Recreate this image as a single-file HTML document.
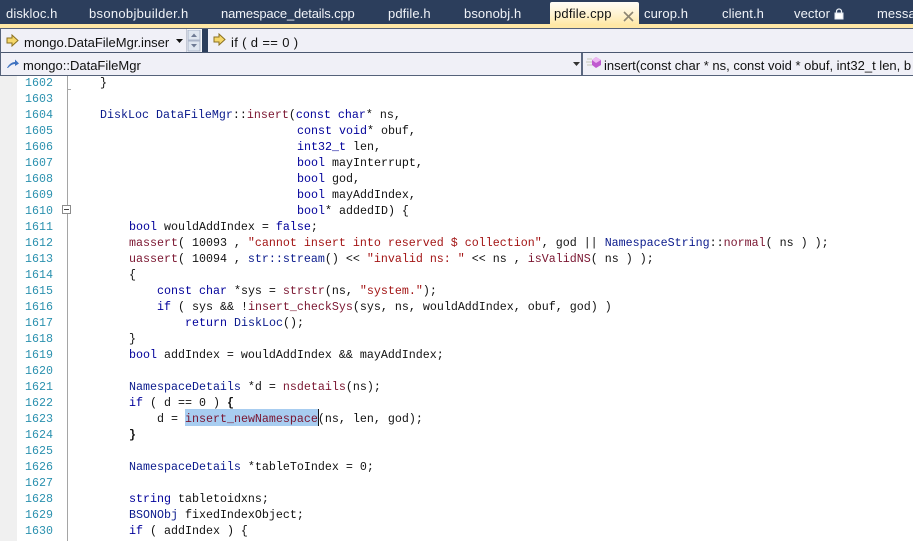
<!DOCTYPE html>
<html><head><meta charset="utf-8"><style>
html,body{margin:0;padding:0;background:#fff}
#p{position:relative;width:913px;height:541px;overflow:hidden;background:#fff;font-family:"Liberation Sans",sans-serif}
.a{position:absolute}
.t{position:absolute;top:6px;font-size:13px;line-height:16px;color:#f0f3f8;white-space:nowrap;letter-spacing:.1px}
.b{position:absolute;font-size:13px;line-height:16px;color:#111;white-space:nowrap}
.n{position:absolute;left:25px;margin-top:1px;font:11.667px/16px "Liberation Mono",monospace;color:#2b91af}
.c{position:absolute;margin-top:1px;font:11.667px/16px "Liberation Mono",monospace;color:#111;white-space:pre;height:16px}
.k{color:#00009a}.f{color:#7a1530}.s{color:#a31515}.u{color:#0a1a8c}
</style></head><body><div id="p">
<div class="a" style="left:0;top:0;width:913px;height:25px;background:#2c3e5c"></div>
<div class="t" style="left:6px">diskloc.h</div>
<div class="t" style="left:89px;letter-spacing:.3px">bsonobjbuilder.h</div>
<div class="t" style="left:221px;letter-spacing:-.14px">namespace_details.cpp</div>
<div class="t" style="left:388px">pdfile.h</div>
<div class="t" style="left:464px">bsonobj.h</div>
<div class="a" style="left:550px;top:2px;width:89px;height:23px;background:linear-gradient(#fffdf7,#fff3cf 55%,#ffe8a6);border-radius:2px 2px 0 0"></div>
<div class="t" style="left:554px;color:#111;letter-spacing:.2px">pdfile.cpp</div>
<svg class="a" style="left:622px;top:10px" width="14" height="12"><path d="M2 2L11 11M11 2L2 11" stroke="#8d8673" stroke-width="1.6" fill="none"/></svg>
<div class="t" style="left:644px">curop.h</div>
<div class="t" style="left:722px">client.h</div>
<div class="t" style="left:794px">vector</div>
<svg class="a" style="left:834px;top:8px" width="10" height="12"><path d="M2.5 5V3.5a2.5 2.5 0 0 1 5 0V5" stroke="#e8eef5" stroke-width="1.2" fill="none"/><rect x="1" y="5" width="8" height="6" fill="#fff" stroke="#dfe6ef"/></svg>
<div class="t" style="left:877px">messa</div>
<div class="a" style="left:0;top:24px;width:913px;height:4px;background:#ffe8a6"></div>
<div class="a" style="left:550px;top:24px;width:89px;height:1px;background:#ffe8a6"></div>
<div class="a" style="left:0;top:28px;width:913px;height:48px;background:#f0f0f7"></div>
<div class="a" style="left:0;top:28px;width:913px;height:1px;background:#55627a"></div>
<div class="a" style="left:0;top:52px;width:913px;height:1px;background:#4a5770"></div>
<div class="a" style="left:0;top:75px;width:913px;height:1px;background:#55627a"></div>
<div class="a" style="left:0;top:29px;width:1px;height:47px;background:#55627a"></div>
<div class="a" style="left:202px;top:29px;width:6px;height:23px;background:#2c3e5c"></div>
<div class="a" style="left:186px;top:29px;width:16px;height:23px;background:#f5f6fa;border-left:1px solid #c4c9d6;box-sizing:border-box"></div>
<svg class="a" style="left:187px;top:30px" width="15" height="22">
<rect x="1" y="0" width="12" height="10" fill="#dfe6f0" stroke="#aab4c8"/><rect x="1" y="11" width="12" height="10" fill="#dfe6f0" stroke="#aab4c8"/>
<path d="M4 7L7 3.5L10 7Z" fill="#6e7a94"/><path d="M4 14L7 17.5L10 14Z" fill="#6e7a94"/></svg>
<svg class="a" style="left:6px;top:34px" width="14" height="13"><path d="M1 4H6V1L12 6.5L6 12V9H1Z" fill="#f5d76a" stroke="#8a7020" stroke-width="1"/></svg>
<div class="b" style="left:24px;top:35px;width:145px;overflow:hidden">mongo.DataFileMgr.insert</div>
<svg class="a" style="left:175px;top:38px" width="9" height="6"><path d="M1 1H8L4.5 5Z" fill="#111"/></svg>
<svg class="a" style="left:213px;top:33px" width="14" height="13"><path d="M1 4H6V1L12 6.5L6 12V9H1Z" fill="#f5d76a" stroke="#8a7020" stroke-width="1"/></svg>
<div class="b" style="left:231px;top:35px;letter-spacing:.35px">if ( d == 0 )</div>
<svg class="a" style="left:6px;top:58px" width="14" height="12"><path d="M1 10C3 6 6 4 9 4V1.5L13 5.5L9 8V6C6 6 4 8 2 10Z" fill="#3f72c0"/></svg>
<div class="b" style="left:23px;top:58px">mongo::DataFileMgr</div>
<svg class="a" style="left:573px;top:62px" width="7" height="5"><path d="M0 0H7L3.5 4Z" fill="#333"/></svg>
<div class="a" style="left:581px;top:53px;width:2px;height:22px;background:#5b6880"></div>
<svg class="a" style="left:586px;top:56px" width="17" height="14"><path d="M1 3H6M0 6H6M1 9H6" stroke="#c9c9b8" stroke-width="1"/><path d="M10 1L15 4V9L10 12L6 9V4Z" fill="#c05ad0"/><path d="M10 1L15 4L10 7L6 4Z" fill="#eeb8f2"/></svg>
<div class="b" style="left:604px;top:58px">insert(const char * ns, const void * obuf, int32_t len, b</div>
<div class="a" style="left:0;top:76px;width:17px;height:465px;background:#f0f0f0"></div>
<div class="a" style="left:67px;top:76px;width:1px;height:465px;background:#a5a5a5"></div>
<div class="a" style="left:62px;top:205px;width:9px;height:9px;box-sizing:border-box;border:1px solid #8c8c8c;background:#fff"></div>
<div class="a" style="left:64px;top:209px;width:5px;height:1px;background:#444"></div>
<div class="a" style="left:67px;top:89px;width:4px;height:1px;background:#a5a5a5"></div>
<div class="a" style="left:185px;top:409px;width:133px;height:17px;background:#a8cdf0"></div>
<div class="a" style="left:318px;top:409px;width:1px;height:17px;background:#111"></div>
<div class="n" style="top:74px">1602</div><div class="n" style="top:90px">1603</div><div class="n" style="top:106px">1604</div><div class="n" style="top:122px">1605</div><div class="n" style="top:138px">1606</div><div class="n" style="top:154px">1607</div><div class="n" style="top:170px">1608</div><div class="n" style="top:186px">1609</div><div class="n" style="top:202px">1610</div><div class="n" style="top:218px">1611</div><div class="n" style="top:234px">1612</div><div class="n" style="top:250px">1613</div><div class="n" style="top:266px">1614</div><div class="n" style="top:282px">1615</div><div class="n" style="top:298px">1616</div><div class="n" style="top:314px">1617</div><div class="n" style="top:330px">1618</div><div class="n" style="top:346px">1619</div><div class="n" style="top:362px">1620</div><div class="n" style="top:378px">1621</div><div class="n" style="top:394px">1622</div><div class="n" style="top:410px">1623</div><div class="n" style="top:426px">1624</div><div class="n" style="top:442px">1625</div><div class="n" style="top:458px">1626</div><div class="n" style="top:474px">1627</div><div class="n" style="top:490px">1628</div><div class="n" style="top:506px">1629</div><div class="n" style="top:522px">1630</div>
<div class="c" style="left:100px;top:74px">}</div>
<div class="c" style="left:100px;top:106px"><span class="u">DiskLoc DataFileMgr</span>::<span class="f">insert</span>(<span class="k">const char</span>* ns,</div>
<div class="c" style="left:297px;top:122px"><span class="k">const void</span>* obuf,</div>
<div class="c" style="left:297px;top:138px"><span class="k">int32_t</span> len,</div>
<div class="c" style="left:297px;top:154px"><span class="k">bool</span> mayInterrupt,</div>
<div class="c" style="left:297px;top:170px"><span class="k">bool</span> god,</div>
<div class="c" style="left:297px;top:186px"><span class="k">bool</span> mayAddIndex,</div>
<div class="c" style="left:297px;top:202px"><span class="k">bool</span>* addedID) {</div>
<div class="c" style="left:129px;top:218px"><span class="k">bool</span> wouldAddIndex = <span class="k">false</span>;</div>
<div class="c" style="left:129px;top:234px"><span class="f">massert</span>( 10093 , <span class="s">"cannot insert into reserved $ collection"</span>, god || <span class="u">NamespaceString</span>::<span class="f">normal</span>( ns ) );</div>
<div class="c" style="left:129px;top:250px"><span class="f">uassert</span>( 10094 , <span class="u">str::stream</span>() &lt;&lt; <span class="s">"invalid ns: "</span> &lt;&lt; ns , <span class="f">isValidNS</span>( ns ) );</div>
<div class="c" style="left:129px;top:266px">{</div>
<div class="c" style="left:157px;top:282px"><span class="k">const char</span> *sys = <span class="f">strstr</span>(ns, <span class="s">"system."</span>);</div>
<div class="c" style="left:157px;top:298px"><span class="k">if</span> ( sys &amp;&amp; !<span class="f">insert_checkSys</span>(sys, ns, wouldAddIndex, obuf, god) )</div>
<div class="c" style="left:185px;top:314px"><span class="k">return</span> <span class="u">DiskLoc</span>();</div>
<div class="c" style="left:129px;top:330px">}</div>
<div class="c" style="left:129px;top:346px"><span class="k">bool</span> addIndex = wouldAddIndex &amp;&amp; mayAddIndex;</div>
<div class="c" style="left:129px;top:378px"><span class="u">NamespaceDetails</span> *d = <span class="f">nsdetails</span>(ns);</div>
<div class="c" style="left:129px;top:394px"><span class="k">if</span> ( d == 0 ) <b>{</b></div>
<div class="c" style="left:157px;top:410px">d = <span class="f">insert_newNamespace</span>(ns, len, god);</div>
<div class="c" style="left:129px;top:426px"><b>}</b></div>
<div class="c" style="left:129px;top:458px"><span class="u">NamespaceDetails</span> *tableToIndex = 0;</div>
<div class="c" style="left:129px;top:490px"><span class="k">string</span> tabletoidxns;</div>
<div class="c" style="left:129px;top:506px"><span class="u">BSONObj</span> fixedIndexObject;</div>
<div class="c" style="left:129px;top:522px"><span class="k">if</span> ( addIndex ) {</div>
</div></body></html>
